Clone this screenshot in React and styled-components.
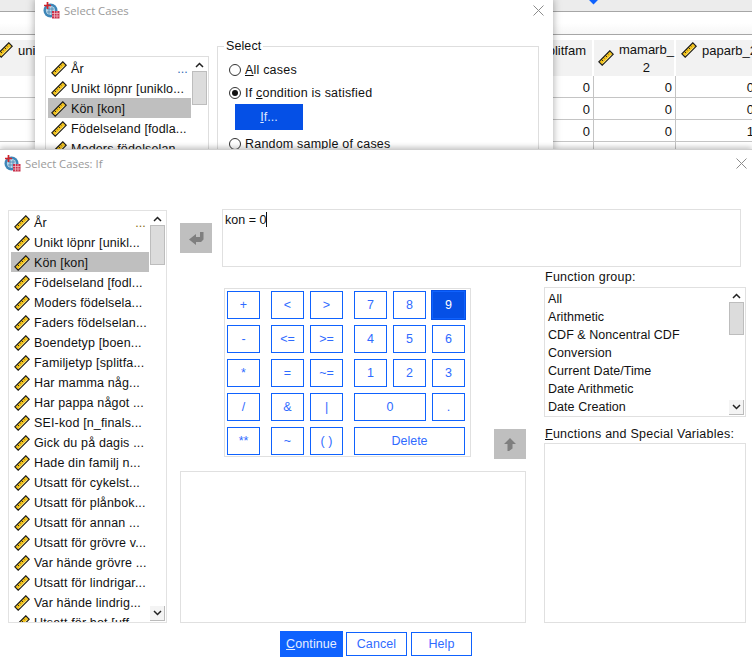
import React from 'react';
import styled, { createGlobalStyle } from 'styled-components';

const Global = createGlobalStyle`
  html, body { margin: 0; padding: 0; background: #fff; }
  body { width: 752px; height: 666px; overflow: hidden; font-family: "Liberation Sans", Arial, sans-serif; font-size: 12px; color: #111; }
  #root { width: 752px; height: 666px; }
  * { box-sizing: border-box; }
`;

const Desktop = styled.div`
  position: relative;
  width: 752px;
  height: 666px;
  overflow: hidden;
  background: #fff;
`;

/* ---------- data editor behind the dialogs ---------- */
const Toolbar = styled.div`
  position: relative;
  height: 12px;
  background: #ececec;
  border-bottom: 1px solid #a6a6a6;
`;
const Marker = styled.div`
  position: absolute;
  left: 590px;
  top: -4px;
  width: 7px;
  height: 7px;
  background: #0f62fe;
  transform: rotate(45deg);
`;
const FormulaBar = styled.div`
  height: 23px;
  background: linear-gradient(#fff 50%, #f6f6f6);
  border-bottom: 1px solid #a6a6a6;
`;
const DataGrid = styled.div`
  display: grid;
  grid-template-columns: 594px 82px 90px;
  grid-template-rows: 36px;
  grid-auto-rows: 22px;
  margin-top: 5px;
`;
const HeaderCell = styled.div`
  background: #f2f2f2;
  border-right: 2px solid #fff;
  display: flex;
  align-items: ${p => (p.$mid ? 'center' : 'flex-start')};
  justify-content: ${p => (p.$split ? 'space-between' : 'flex-start')};
  font-size: 13px;
  padding: ${p => (p.$mid ? '0 0 0 4px' : '2px 0 0 5px')};
  gap: 5px;
`;
const HeadName = styled.span`
  text-align: center;
  line-height: 18px;
  padding-top: ${p => p.$pt || 0}px;
  padding-right: ${p => p.$pr || 0}px;
`;
const FirstHead = styled.span`
  display: flex;
  gap: 5px;
  margin-left: -8px;
  line-height: 18px;
`;
const DataCell = styled.div`
  border-right: 1px solid #c4c4c4;
  border-bottom: 1px solid #c4c4c4;
  text-align: right;
  padding: 1px ${p => p.$pr || 3}px 0 0;
  line-height: 21px;
  font-size: 13px;
`;

/* ---------- dialogs ---------- */
const BackDialog = styled.div`
  position: absolute;
  left: 35px;
  top: -1px;
  width: 518px;
  height: 152px;
  background: #fff;
  box-shadow: 0 0 8px rgba(0, 0, 0, 0.35);
  overflow: hidden;
`;
const FrontDialog = styled.div`
  position: absolute;
  left: 0;
  top: 149px;
  width: 752px;
  height: 517px;
  background: #fff;
  border-top: 1px solid #cfcfcf;
  box-shadow: 0 -2px 5px rgba(0, 0, 0, 0.22);
`;
const TitleBar = styled.div`
  display: flex;
  align-items: center;
  gap: 4px;
  height: 22px;
  padding: 0 5px 0 ${p => p.$left}px;
  margin-top: ${p => p.$top}px;
  color: #9a9a9a;
  font-family: "Open Sans", "Liberation Sans", sans-serif;
  font-size: 11.3px;
`;
const CloseBox = styled.div`
  margin-left: auto;
  margin-right: ${p => p.$mr || 0}px;
  display: flex;
  color: #8c8c8c;
`;

const BackBody = styled.div`
  display: flex;
  gap: 8px;
  padding: 35px 0 0 10px;
`;
const BackList = styled.div`
  position: relative;
  width: 164px;
  height: 120px;
  border: 1px solid #dedede;
  padding: 1px 0 0 2px;
  overflow: hidden;
`;
const SelectGroup = styled.fieldset`
  margin: -17px 0 0 0;
  width: 322px;
  height: 130px;
  border: 1px solid #dedede;
  padding: 3px 0 0 11px;
  display: flex;
  flex-direction: column;
  align-items: flex-start;
  min-inline-size: 0;
`;
const Legend = styled.legend`
  padding: 0 2px;
  margin-left: -5px;
  font-size: 12.5px;
  letter-spacing: 0.1px;
`;
const RadioRow = styled.label`
  display: flex;
  align-items: center;
  gap: 4px;
  height: 20px;
  font-size: 12.5px;
  margin-top: ${p => p.$mt || 0}px;
  letter-spacing: 0.2px;
`;
const RadioDot = styled.span`
  width: 12px;
  height: 12px;
  border-radius: 50%;
  border: 1px solid #333;
  background: #fff;
  display: flex;
  align-items: center;
  justify-content: center;
  &::after {
    content: '';
    display: ${p => (p.$on ? 'block' : 'none')};
    width: 6px;
    height: 6px;
    border-radius: 50%;
    background: #111;
  }
`;
const IfButton = styled.div`
  width: 68px;
  height: 26px;
  margin: 1px 0 4px 6px;
  background: #0550e6;
  color: #dfe8ff;
  text-align: center;
  line-height: 26px;
  font-size: 12.5px;
`;

/* ---------- variable list ---------- */
const FrontBody = styled.div`
  display: grid;
  grid-template-columns: 159px 346px 202px;
  column-gap: 13px;
  padding: 35px 0 0 8px;
`;
const VarList = styled.div`
  position: relative;
  grid-row: 1 / span 2;
  height: 413px;
  margin-top: 1px;
  border: 1px solid #e2e2e2;
  padding: 1px 0 0 2px;
  overflow: hidden;
`;
const Row = styled.div`
  display: flex;
  align-items: center;
  gap: 4px;
  width: ${p => p.$w}px;
  height: 20px;
  flex: none;
  padding: 2px 0 0 3px;
  white-space: nowrap;
  font-size: 12.5px;
  letter-spacing: 0.15px;
  background: ${p => (p.$sel ? '#bfbfbf' : 'transparent')};
`;
const Dots = styled.span`
  margin-left: auto;
  margin-right: 3px;
  color: ${p => p.$color};
`;
const ScrollTrack = styled.div`
  position: absolute;
  right: 1px;
  top: 1px;
  bottom: 1px;
  width: 15px;
  display: flex;
  flex-direction: column;
  background: #fff;
`;
const ScrollArrow = styled.div`
  height: ${p => p.$h || 14}px;
  flex: none;
  display: flex;
  align-items: center;
  justify-content: center;
  color: #222;
  margin-top: ${p => (p.$end ? 'auto' : '0')};
  ${p => p.$end && 'border-right: 1px solid #bbb; border-bottom: 1px solid #bbb; background: #f4f4f4;'}
`;
const ScrollThumb = styled.div`
  height: ${p => p.$h}px;
  flex: none;
  background: #dcdcdc;
  border: 1px solid #bdbdbd;
`;

/* ---------- centre and right columns ---------- */
const Expression = styled.div`
  grid-column: 2 / span 2;
  display: flex;
  gap: 10px;
`;
const ArrowButton = styled.div`
  flex: none;
  width: 32px;
  height: 30px;
  background: #bfbfbf;
  display: flex;
  align-items: center;
  justify-content: center;
  margin-top: ${p => p.$mt || 0}px;
  margin-bottom: ${p => p.$mb || 0}px;
`;
const ExprBox = styled.div`
  flex: 1;
  height: 58px;
  border: 1px solid #e0e0e0;
  padding: 2px 2px;
  font-size: 12.5px;
  line-height: 17px;
`;
const Caret = styled.span`
  display: inline-block;
  width: 1px;
  height: 15px;
  background: #111;
  vertical-align: -3px;
`;
const Center = styled.div`
  display: flex;
  flex-direction: column;
`;
const CalcRow = styled.div`
  display: flex;
  align-items: flex-end;
  justify-content: space-between;
  margin-top: 21px;
`;
const CalcPad = styled.div`
  display: flex;
  gap: 11px;
  margin-left: 44px;
  width: 247px;
  height: 169px;
  border: 1px solid #e0e0e0;
  padding: 2px;
`;
const KeyGroup = styled.div`
  display: grid;
  grid-template-columns: repeat(${p => p.$cols}, 33px);
  grid-auto-rows: 28px;
  gap: 6px;
`;
const Key = styled.div`
  grid-column: span ${p => p.$span || 1};
  border: 1px solid #0f62fe;
  display: flex;
  align-items: center;
  justify-content: center;
  color: ${p => (p.$active ? '#fff' : '#2f6bff')};
  background: ${p => (p.$active ? '#0550e6' : '#fff')};
  box-shadow: ${p => (p.$active ? '0 0 0 1px #0550e6' : 'none')};
  font-size: 12.5px;
`;
const NotesBox = styled.div`
  height: 152px;
  margin-top: 14px;
  border: 1px solid #e0e0e0;
`;
const Right = styled.div`
  display: flex;
  flex-direction: column;
  margin-left: 5px;
  width: 202px;
`;
const FieldLabel = styled.div`
  font-size: 12.5px;
  line-height: 15px;
  margin: ${p => p.$mt}px 0 ${p => p.$mb}px 1px;
  letter-spacing: 0.25px;
`;
const FuncList = styled.div`
  position: relative;
  height: 130px;
  border: 1px solid #e0e0e0;
  padding: 2px 0 0 3px;
  overflow: hidden;
`;
const FuncRow = styled.div`
  height: 18px;
  line-height: 18px;
  font-size: 12.5px;
  letter-spacing: 0.05px;
`;
const FuncBox = styled.div`
  height: 180px;
  border: 1px solid #e0e0e0;
`;
const Footer = styled.div`
  display: flex;
  align-items: center;
  gap: 3px;
  padding-left: 280px;
  margin-top: 8px;
`;
const FooterButton = styled.div`
  width: ${p => p.$w}px;
  height: ${p => (p.$primary ? 26 : 24)}px;
  margin-right: ${p => p.$mr || 0}px;
  background: ${p => (p.$primary ? '#0f62fe' : '#fff')};
  color: ${p => (p.$primary ? '#e6eeff' : '#2f6bff')};
  border: 1px solid #0f62fe;
  display: flex;
  align-items: center;
  justify-content: center;
  font-size: 12.5px;
  letter-spacing: 0.1px;
`;

/* ---------- drawings ---------- */
const Ruler = () => (
  <svg width="16" height="16" viewBox="0 0 16 16" style={{ flex: 'none' }}>
    <polygon points="0.8,11.8 11.8,0.8 15.2,4.2 4.2,15.2" fill="#f2c21b" stroke="#1c1c1c" strokeWidth="1.2" />
    <path d="M3.2 9.2l1.7 1.7M5.2 7.2l1.1 1.1M7.2 5.2l1.7 1.7M9.2 3.2l1.1 1.1" stroke="#1c1c1c" strokeWidth="1" />
    <path d="M4.8 13.4L13.4 4.8" stroke="#fff2a8" strokeWidth="0.8" />
  </svg>
);
const AppIcon = () => (
  <svg width="17" height="17" viewBox="0 0 17 17" style={{ flex: 'none' }}>
    <circle cx="7.5" cy="8.5" r="7" fill="#3d86b8" />
    <circle cx="7.5" cy="8.5" r="4.6" fill="#b9d6e8" />
    <path d="M4 7h7M4 10h7M6 5v8M9 5v8" stroke="#4a86b0" strokeWidth="0.8" />
    <path d="M1 3.5h7M4.5 0v7" stroke="#d2232a" strokeWidth="1.7" />
    <rect x="9" y="9" width="7.5" height="7.5" fill="#c8304a" />
    <path d="M9 11.5h7.5M9 14h7.5M11.5 9v7.5M14 9v7.5" stroke="#f3c6cf" strokeWidth="0.7" />
  </svg>
);
const CloseIcon = () => (
  <svg width="11" height="11" viewBox="0 0 11 11">
    <path d="M0.5 0.5l10 10M10.5 0.5l-10 10" stroke="currentColor" strokeWidth="1" fill="none" />
  </svg>
);
const Chevron = ({ up }) => (
  <svg width="9" height="6" viewBox="0 0 9 6">
    <path d={up ? 'M1 5l3.5-3.5L8 5' : 'M1 1l3.5 3.5L8 1'} stroke="#222" strokeWidth="1.5" fill="none" />
  </svg>
);
const EnterArrow = () => (
  <svg width="15" height="14" viewBox="0 0 15 14">
    <path d="M0 8.5L7 3v3h4V1h3.5v7.5L12 11H7v3z" fill="#7f7f7f" />
  </svg>
);
const UpArrow = () => (
  <svg width="12" height="13" viewBox="0 0 12 13">
    <path d="M6 0l6 6H8.5v4.5L5 13H3.5V6H0z" fill="#7f7f7f" />
  </svg>
);

const Scrollbar = ({ thumb }) => (
  <ScrollTrack>
    <ScrollArrow $h={13}><Chevron up /></ScrollArrow>
    <ScrollThumb $h={thumb} />
    <ScrollArrow $h={15} $end><Chevron /></ScrollArrow>
  </ScrollTrack>
);

const variables = [
  'Unikt löpnr [unikl...', 'Kön [kon]', 'Födelseland [fodl...', 'Moders födelsela...', 'Faders födelselan...',
  'Boendetyp [boen...', 'Familjetyp [splitfa...', 'Har mamma någ...', 'Har pappa något ...', 'SEI-kod [n_finals...',
  'Gick du på dagis ...', 'Hade din familj n...', 'Utsatt för cykelst...', 'Utsatt för plånbok...', 'Utsatt för annan ...',
  'Utsatt för grövre v...', 'Var hände grövre ...', 'Utsatt för lindrigar...', 'Var hände lindrig...', 'Utsatt för hot [uff...',
];
const backVariables = ['Unikt löpnr [uniklo...', 'Kön [kon]', 'Födelseland [fodla...', 'Moders födelselan...'];
const functions = ['All', 'Arithmetic', 'CDF & Noncentral CDF', 'Conversion', 'Current Date/Time', 'Date Arithmetic', 'Date Creation'];

const ops = ['+', '-', '*', '/', '**'];
const compare = ['<', '>', '<=', '>=', '=', '~=', '&', '|', '~', '( )'];
const digits = [
  ['7'], ['8'], ['9', 1, true], ['4'], ['5'], ['6'], ['1'], ['2'], ['3'], ['0', 2], ['.'], ['Delete', 3],
];

const rows = [0, 0, 0, 1];

export default function App() {
  return (
    <Desktop>
      <Global />
      <Toolbar><Marker /></Toolbar>
      <FormulaBar />
      <DataGrid>
        <HeaderCell $split>
          <FirstHead><Ruler /><span>uni</span></FirstHead>
          <HeadName $pr={6}>splitfam</HeadName>
        </HeaderCell>
        <HeaderCell $mid>
          <Ruler />
          <HeadName $pt={1}>mamarb_<br />2</HeadName>
        </HeaderCell>
        <HeaderCell>
          <Ruler />
          <HeadName>paparb_2</HeadName>
        </HeaderCell>
        {rows.map((r, i) => (
          <React.Fragment key={i}>
            <DataCell>0</DataCell>
            <DataCell>0</DataCell>
            <DataCell $pr={11}>{i === 2 ? 1 : 0}</DataCell>
          </React.Fragment>
        ))}
      </DataGrid>

      <BackDialog>
        <TitleBar $left={8} $top={0}>
          <AppIcon />
          <span>Select Cases</span>
          <CloseBox $mr={4}><CloseIcon /></CloseBox>
        </TitleBar>
        <BackBody>
          <BackList>
            <Row $w={143}><Ruler />År<Dots $color="#2f6bb8">...</Dots></Row>
            {backVariables.map((v, i) => <Row key={v} $w={143} $sel={i === 1}><Ruler />{v}</Row>)}
            <Scrollbar thumb={34} />
          </BackList>
          <SelectGroup>
            <Legend>Select</Legend>
            <RadioRow $mt={4}><RadioDot /><span><u>A</u>ll cases</span></RadioRow>
            <RadioRow $mt={3}><RadioDot $on /><span>If <u>c</u>ondition is satisfied</span></RadioRow>
            <IfButton><u>I</u>f...</IfButton>
            <RadioRow><RadioDot /><span>Random sample of cases</span></RadioRow>
          </SelectGroup>
        </BackBody>
      </BackDialog>

      <FrontDialog>
        <TitleBar $left={4} $top={2}>
          <AppIcon />
          <span>Select Cases: If</span>
          <CloseBox><CloseIcon /></CloseBox>
        </TitleBar>
        <FrontBody>
          <VarList>
            <Row $w={138}><Ruler />År<Dots $color="#8a6a10">...</Dots></Row>
            {variables.map((v, i) => <Row key={v} $w={138} $sel={i === 1}><Ruler />{v}</Row>)}
            <Scrollbar thumb={40} />
          </VarList>
          <Expression>
            <ArrowButton $mt={14}><EnterArrow /></ArrowButton>
            <ExprBox>kon = 0<Caret /></ExprBox>
          </Expression>
          <Center>
            <CalcRow>
              <CalcPad>
                <KeyGroup $cols={1}>{ops.map(k => <Key key={k}>{k}</Key>)}</KeyGroup>
                <KeyGroup $cols={2}>{compare.map(k => <Key key={k}>{k}</Key>)}</KeyGroup>
                <KeyGroup $cols={3}>
                  {digits.map(([k, span, active]) => <Key key={k} $span={span} $active={active}>{k}</Key>)}
                </KeyGroup>
              </CalcPad>
              <ArrowButton $mb={-2}><UpArrow /></ArrowButton>
            </CalcRow>
            <NotesBox />
          </Center>
          <Right>
            <FieldLabel $mt={3} $mb={2}>Function <u>g</u>roup:</FieldLabel>
            <FuncList>
              {functions.map(f => <FuncRow key={f}>{f}</FuncRow>)}
              <Scrollbar thumb={33} />
            </FuncList>
            <FieldLabel $mt={10} $mb={1}><u>F</u>unctions and Special Variables:</FieldLabel>
            <FuncBox />
          </Right>
        </FrontBody>
        <Footer>
          <FooterButton $primary $w={63}><span><u>C</u>ontinue</span></FooterButton>
          <FooterButton $w={61} $mr={1}>Cancel</FooterButton>
          <FooterButton $w={61}>Help</FooterButton>
        </Footer>
      </FrontDialog>
    </Desktop>
  );
}
